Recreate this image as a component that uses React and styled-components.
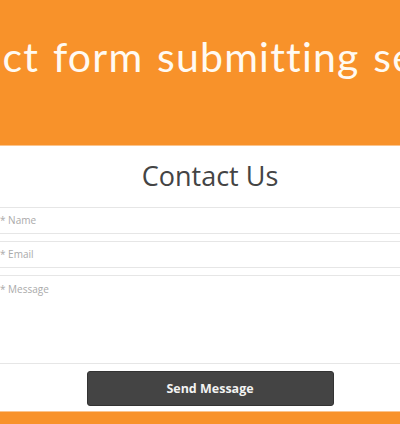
import React from 'react';
import styled, { createGlobalStyle } from 'styled-components';

const GlobalStyle = createGlobalStyle`
  html, body {
    margin: 0;
    padding: 0;
    background: #fff;
  }

  body {
    font-family: "Open Sans", "Noto Sans", sans-serif;
    overflow: hidden;
  }
`;

const Page = styled.div`
  width: 400px;
  height: 424px;
  overflow: hidden;
  display: flex;
  flex-direction: column;
`;

const Banner = styled.header`
  height: 145px;
  flex-shrink: 0;
  background: #f8922a;
  display: flex;
  justify-content: center;
  align-items: center;
  overflow: hidden;
  border-bottom: 1px solid #fbc48c;
`;

const BannerTitle = styled.h1`
  margin: 0 0 32px;
  flex-shrink: 0;
  white-space: nowrap;
  font-family: "Lato", "Noto Sans", sans-serif;
  font-weight: 400;
  font-size: 41px;
  letter-spacing: 1.2px;
  word-spacing: 2px;
  color: #fffaf2;
`;

const Section = styled.section`
  flex: 1;
  display: flex;
  flex-direction: column;
  align-items: center;
  padding-top: 12px;
`;

const Heading = styled.h2`
  margin: 0 0 13px 20px;
  font-weight: 400;
  font-size: 27px;
  line-height: 36px;
  color: #444;
`;

const Form = styled.form`
  width: 440px;
  margin-left: 20px;
  display: flex;
  flex-direction: column;
  align-items: center;
  gap: 7px;
`;

const Field = styled.input`
  box-sizing: border-box;
  width: 100%;
  height: 27px;
  padding: 0 20px 1px 9px;
  border: 1px solid #e6e6e6;
  border-radius: 0;
  background: #fff;
  font-family: "Open Sans", sans-serif;
  font-size: 10px;
  color: #555;
  outline: none;

  &::placeholder {
    color: #aaa;
  }
`;

const MessageField = styled.textarea`
  box-sizing: border-box;
  width: 100%;
  height: 89px;
  padding: 6px 20px 6px 9px;
  border: 1px solid #e6e6e6;
  background: #fff;
  font-family: "Open Sans", sans-serif;
  font-size: 10px;
  color: #555;
  resize: none;
  outline: none;

  &::placeholder {
    color: #aaa;
  }
`;

const SendButton = styled.button`
  width: 247px;
  height: 35px;
  border: 1px solid #333;
  border-radius: 3px;
  background: #444;
  color: #f2f2f2;
  font-family: "Open Sans", sans-serif;
  font-weight: 700;
  font-size: 12.5px;
  cursor: pointer;
`;

const Footer = styled.footer`
  height: 12px;
  flex-shrink: 0;
  margin-top: auto;
  background: #f8922a;
  border-top: 1px solid #fbc48c;
`;

export default function App() {
  return (
    <Page>
      <GlobalStyle />
      <Banner>
        <BannerTitle>Contact form submitting section</BannerTitle>
      </Banner>
      <Section>
        <Heading>Contact Us</Heading>
        <Form onSubmit={(e) => e.preventDefault()}>
          <Field type="text" placeholder="* Name" />
          <Field type="email" placeholder="* Email" />
          <MessageField placeholder="* Message" />
          <SendButton type="submit">Send Message</SendButton>
        </Form>
      </Section>
      <Footer />
    </Page>
  );
}
